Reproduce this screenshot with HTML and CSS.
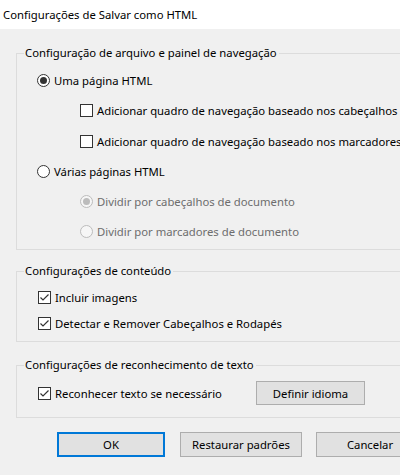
FILE: index.html
```html
<!DOCTYPE html>
<html lang="pt-BR">
<head>
    <meta charset="UTF-8">
    <title>Configurações de Salvar como HTML</title>
    <link rel="stylesheet" href="styles.css">
</head>
<body>
    <div class="dialog">
        <div class="titlebar">Configurações de Salvar como HTML</div>

        <div class="content">
            <fieldset class="group group-files">
                <legend>Configuração de arquivo e painel de navegação</legend>
                <div class="row"><span class="radio checked"></span>Uma página HTML</div>
                <div class="row sub"><span class="check"></span>Adicionar quadro de navegação baseado nos cabeçalhos</div>
                <div class="row sub"><span class="check"></span>Adicionar quadro de navegação baseado nos marcadores</div>
                <div class="row"><span class="radio"></span>Várias páginas HTML</div>
                <div class="row sub disabled"><span class="radio checked"></span>Dividir por cabeçalhos de documento</div>
                <div class="row sub disabled"><span class="radio"></span>Dividir por marcadores de documento</div>
            </fieldset>

            <fieldset class="group group-content">
                <legend>Configurações de conteúdo</legend>
                <div class="row short"><span class="check checked"><svg viewBox="0 0 11 11"><polyline points="1.5,5.5 4,8 9.5,2.5"/></svg></span>Incluir imagens</div>
                <div class="row short"><span class="check checked"><svg viewBox="0 0 11 11"><polyline points="1.5,5.5 4,8 9.5,2.5"/></svg></span>Detectar e Remover Cabeçalhos e Rodapés</div>
            </fieldset>

            <fieldset class="group group-ocr">
                <legend>Configurações de reconhecimento de texto</legend>
                <div class="row">
                    <span class="check checked"><svg viewBox="0 0 11 11"><polyline points="1.5,5.5 4,8 9.5,2.5"/></svg></span><span class="ocr-label">Reconhecer texto se necessário</span>
                    <button class="btn btn-lang">Definir idioma</button>
                </div>
            </fieldset>

            <div class="buttons">
                <button class="btn btn-ok">OK</button>
                <button class="btn btn-reset">Restaurar padrões</button>
                <button class="btn">Cancelar</button>
            </div>
        </div>
    </div>
</body>
</html>
```

FILE: styles.css
```css
html, body {
    margin: 0;
    padding: 0;
    overflow: hidden;
}
body {
    width: 400px;
    height: 475px;
    background: #f0f0f0;
    font-family: "Noto Sans", sans-serif;
    font-size: 11.3px;
    color: #000;
}
.dialog {
    width: 400px;
    overflow: hidden;
}
.titlebar {
    height: 29px;
    line-height: 30px;
    padding-left: 3px;
    background: #fff;
}
.content {
    padding: 0 0 0 16px;
}
.group {
    box-sizing: border-box;
    width: 430px;
    margin: 0;
    padding: 0 0 3px 0;
    border: 1px solid #dcdcdc;
    min-width: 0;
}
.group legend {
    margin-left: 7px;
    padding: 0 2px 0 1px;
    line-height: 16px;
}
.group-files {
    margin-top: 16px;
}
.group-files legend + .row {
    margin-top: 4px;
}
.group-content {
    margin-top: 13px;
    padding: 5px 0 5px 0;
}
.group-ocr {
    margin-top: 15px;
    padding: 5px 0 9px 0;
}
.row {
    height: 30px;
    display: flex;
    align-items: center;
    padding-left: 20px;
    white-space: nowrap;
}
.row.short {
    height: 26px;
    padding-left: 21px;
}
.row.sub {
    padding-left: 63px;
}
.group-files .row:nth-of-type(2) {
    height: 31px;
}
.group-ocr .row {
    padding-left: 21px;
}
.ocr-label {
    width: 201px;
}
.disabled {
    color: #6d6d6d;
}

.radio, .check {
    box-sizing: border-box;
    flex: none;
    width: 13px;
    height: 13px;
    margin-right: 4px;
    border: 1px solid #333;
    background: #fff;
}
.radio {
    border-radius: 50%;
    display: flex;
    align-items: center;
    justify-content: center;
}
.radio.checked::after {
    content: "";
    width: 7px;
    height: 7px;
    border-radius: 50%;
    background: #333;
}
.disabled .radio {
    border-color: #bcbcbc;
    background: #f6f6f6;
}
.disabled .radio.checked::after {
    background: #bcbcbc;
}
.check svg {
    display: block;
    width: 11px;
    height: 11px;
}
.check polyline {
    fill: none;
    stroke: #333;
    stroke-width: 1.2;
}

.btn {
    box-sizing: border-box;
    flex: none;
    height: 25px;
    width: 108px;
    margin: 0;
    padding: 0;
    font: inherit;
    color: #000;
    background: #e1e1e1;
    border: 1px solid #adadad;
}
.btn-lang {
    width: 109px;
    height: 24px;
}
.buttons {
    display: flex;
    gap: 14px;
    margin-top: 14px;
    padding-left: 41px;
}
.btn-ok {
    border: 2px solid #0078d7;
    margin-right: 1px;
}
.btn-reset {
    width: 122px;
}
```
